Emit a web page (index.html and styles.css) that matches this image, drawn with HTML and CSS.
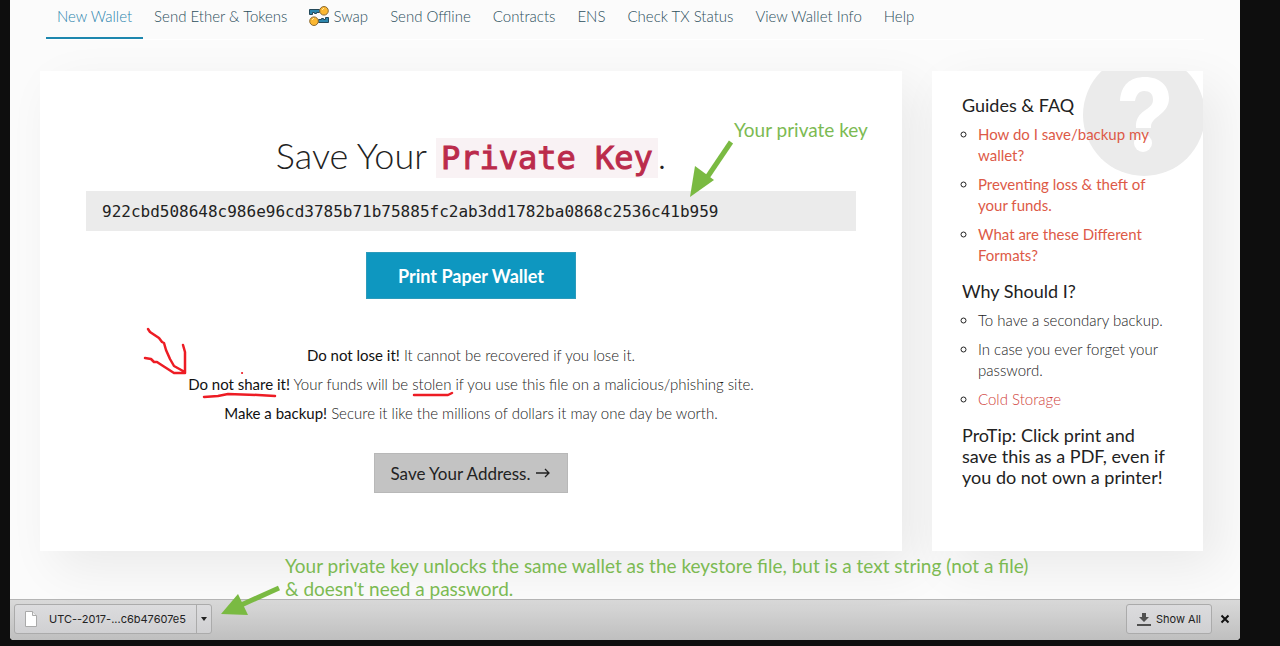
FILE: index.html
```html
<!DOCTYPE html>
<html lang="en">
<head>
    <meta charset="UTF-8">
    <meta name="viewport" content="width=device-width, initial-scale=1.0">
    <title>Save Your Private Key</title>
    <link rel="stylesheet" href="styles.css">
</head>
<body>

    <div class="window">

        <!-- Navigation -->
        <nav class="nav">
            <a href="#" class="active">New Wallet</a>
            <a href="#">Send Ether &amp; Tokens</a>
            <a href="#" class="swap">
                <svg width="20" height="20" viewBox="0 0 20 20" aria-hidden="true">
                    <path d="M10.500 3.500h-10v5h3v-2h2v1h2v-1h3z" fill="#2d86ad" stroke="#24485a"/>
                    <circle cx="15" cy="4.800" r="4.300" fill="#fbb731" stroke="#8a6a35"/>
                    <path d="M9.500 16.500h10v-5h-3v2h-2v-1h-2v1h-3z" fill="#2d86ad" stroke="#24485a"/>
                    <circle cx="5" cy="15.200" r="4.300" fill="#fbb731" stroke="#8a6a35"/>
                    <path d="M13 4l2-2M3 14l2-2" stroke="#ffe9a8"/>
                </svg>
                Swap</a>
            <a href="#">Send Offline</a>
            <a href="#">Contracts</a>
            <a href="#">ENS</a>
            <a href="#">Check TX Status</a>
            <a href="#">View Wallet Info</a>
            <a href="#">Help</a>
        </nav>

        <div class="content">

            <!-- Private key panel -->
            <main class="panel">
                <h1>Save Your <code>Private Key</code>.</h1>
                <input type="text" class="key" aria-label="Private key" readonly value="922cbd508648c986e96cd3785b71b75885fc2ab3dd1782ba0868c2536c41b959">
                <button type="button" class="btn-print">Print Paper Wallet</button>

                <div class="warnings">
                    <p><strong>Do not lose it!</strong> It cannot be recovered if you lose it.</p>
                    <p><strong>Do not share it!</strong> Your funds will be stolen if you use this file on a malicious/phishing site.</p>
                    <p><strong>Make a backup!</strong> Secure it like the millions of dollars it may one day be worth.</p>
                </div>

                <button type="button" class="btn-next">Save Your Address.
                    <svg width="16" height="12" viewBox="0 0 16 12" aria-hidden="true">
                        <path d="M1 6h13M10 2l4 4-4 4" fill="none" stroke="#222" stroke-width="1.3"/>
                    </svg>
                </button>
            </main>

            <!-- Help sidebar -->
            <aside class="sidebar">
                <svg class="question" width="122" height="122" viewBox="0 0 122 122" aria-hidden="true">
                    <circle cx="61" cy="61" r="61" fill="#ebebeb"/>
                    <path d="M37 47C38 31 47 23 62 23c15 0 24 9 24 21 0 17-18 18-18 29v1H53c-1-19 17-17 17-28 0-6-3-9-9-9-5 0-8 4-9 10z" fill="#fff"/>
                    <circle cx="60" cy="89" r="9" fill="#fff"/>
                </svg>
                <h2>Guides &amp; FAQ</h2>
                <ul class="guides">
                    <li><a href="#">How do I save/backup my wallet?</a></li>
                    <li><a href="#">Preventing loss &amp; theft of your funds.</a></li>
                    <li><a href="#">What are these Different Formats?</a></li>
                </ul>
                <h2>Why Should I?</h2>
                <ul>
                    <li>To have a secondary backup.</li>
                    <li>In case you ever forget your password.</li>
                    <li><a href="#">Cold Storage</a></li>
                </ul>
                <h2>ProTip: Click print and save this as a PDF, even if you do not own a printer!</h2>
            </aside>
        </div>

        <!-- Download bar -->
        <footer class="downloads">
            <div class="file">
                <button type="button" class="file-name">
                    <svg width="12" height="16" viewBox="0 0 12 16" aria-hidden="true">
                        <path d="M.5.5h7l4 4v11H.5z" fill="#fff" stroke="#aaa"/>
                        <path d="M7.500.5v4h4" fill="#eee" stroke="#aaa"/>
                    </svg>
                    UTC--2017-...c6b47607e5
                </button>
                <button type="button" class="file-menu" aria-label="Download options">
                    <svg width="6" height="4" viewBox="0 0 6 4"><path d="M0 0h6L3 4z" fill="#222"/></svg>
                </button>
            </div>
            <button type="button" class="show-all">
                <svg width="14" height="14" viewBox="0 0 14 14" aria-hidden="true">
                    <path d="M5 1h4v4h3L7 10 2 5h3zM0 12h14v2H0z" fill="#505050"/>
                </svg>
                Show All
            </button>
            <button type="button" class="close" aria-label="Close">
                <svg width="10" height="10" viewBox="0 0 10 10"><path d="M1.500 1.500l7 7M8.500 1.500l-7 7" stroke="#111" stroke-width="2"/></svg>
            </button>
        </footer>

        <!-- Notes drawn over the page -->
        <p class="note note-key">Your private key</p>
        <p class="note note-file">Your private key unlocks the same wallet as the keystore file, but is a text string (not a file)<br>&amp; doesn't need a password.</p>
        <svg class="marks" width="1230" height="640" viewBox="10 0 1230 640" aria-hidden="true">
            <g fill="#7aba42" stroke="#7aba42">
                <path d="M731 142l-27 40" stroke-width="5"/>
                <path d="M690 197l5-31 19 14z" stroke="none"/>
                <path d="M279 588l-40 18" stroke-width="5"/>
                <path d="M221 614l17-20 10 21z" stroke="none"/>
            </g>
            <g fill="none" stroke="#ed1c24" stroke-width="2.500" stroke-linecap="round" stroke-linejoin="round">
                <path d="M148 329l2 3 9 6 3 4 2 1 2 7 4 9 4 7 9 5M183 345l2 7v21h-11l-14-9-3-2h-3l-3-3-6-1"/>
                <path d="M204 397l14-1 10-2 30 1 17 1M414 395h34l4-2"/>
                <path d="M242 373h.1" stroke-width="2"/>
            </g>
        </svg>
    </div>

</body>
</html>
```

FILE: styles.css
```css
* {
    box-sizing: border-box;
    margin: 0;
    padding: 0;
}

body {
    background: #0e0e0e;
    color: #222;
    font-family: Lato, sans-serif;
    font-size: 15px;
    line-height: 21px;
}

button,
input {
    font-family: inherit;
    border: none;
}

.window {
    position: relative;
    margin: 0 40px 6px 10px;
    background: #fbfbfb;
    border-radius: 0 0 4px 4px;
    overflow: hidden;
}

/* Navigation */
.nav {
    display: flex;
    margin: 0 36px;
    border-bottom: 1px solid #fff;
}

.nav a {
    padding: 6px 11px 10px;
    color: #2c4f5c;
    font-size: 15px;
    font-weight: 300;
    text-decoration: none;
    border-bottom: 2px solid transparent;
}

.nav .active {
    color: #2b84ad;
    border-color: #1d87ae;
}

.nav .swap {
    display: flex;
    gap: 4px;
}

/* Columns */
.content {
    display: grid;
    grid-template-columns: 862fr 271fr;
    gap: 30px;
    padding: 31px 37px 48px 30px;
}

.panel,
.sidebar {
    background: #fff;
    box-shadow: 16px 16px 47px rgba(0, 0, 0, 0.07);
}

.panel {
    display: flex;
    flex-direction: column;
    align-items: center;
    padding: 62px 46px 58px;
}

h1 {
    margin-bottom: 11px;
    font-size: 36px;
    font-weight: 300;
    line-height: 44px;
    color: #222;
}

h1 code {
    padding: 1px 5px;
    background: #f9f2f4;
    color: #bb2b4b;
    font-family: "DejaVu Sans Mono", monospace;
    font-size: 32px;
    -webkit-text-stroke: 1px #bb2b4b;
}

.key {
    width: 100%;
    height: 40px;
    margin-bottom: 21px;
    padding: 0 16px;
    background: #ebebeb;
    color: #222;
    font-family: "DejaVu Sans Mono", monospace;
    font-size: 16px;
}

.btn-print {
    height: 47px;
    padding: 0 31px;
    background: #0e97c0;
    border: 1px solid #2c9bbb;
    color: #fff;
    font-size: 18px;
    font-weight: 700;
}

.warnings {
    display: flex;
    flex-direction: column;
    gap: 8px;
    margin: 46px 0 29px;
    text-align: center;
    font-weight: 300;
}

.warnings strong {
    font-weight: 400;
    color: #111;
}

.btn-next {
    display: flex;
    align-items: center;
    gap: 5px;
    height: 40px;
    padding: 0 16px;
    background: #c3c3c3;
    border: 1px solid #b8b8b8;
    color: #222;
    font-size: 17px;
}

/* Help sidebar */
.sidebar {
    position: relative;
    overflow: hidden;
    padding: 24px 30px;
}

.question {
    position: absolute;
    top: -17px;
    right: -2px;
}

.sidebar h2 {
    position: relative;
    font-size: 18px;
    font-weight: 400;
    line-height: 21px;
    color: #222;
}

.sidebar ul {
    position: relative;
    margin: 8px 0 15px;
    padding-left: 16px;
    list-style: circle;
    font-weight: 300;
}

.sidebar li {
    margin-bottom: 8px;
}

.sidebar a {
    color: #d03f3b;
    text-decoration: none;
}

.guides a {
    color: #dd5a47;
    font-weight: 400;
}

/* Download bar */
.downloads {
    display: flex;
    align-items: center;
    height: 41px;
    padding: 0 10px 3px 4px;
    background: linear-gradient(#d9d9d9, #bfbfbf);
    border-top: 1px solid #b5b5b5;
}

.downloads button {
    background: none;
    color: #222;
    font-family: Inter, sans-serif;
    font-size: 11px;
}

.file {
    display: flex;
    height: 30px;
    border: 1px solid #ababab;
    border-radius: 3px;
    background: linear-gradient(#dcdcde, #d0d0d2);
}

.file-name {
    display: flex;
    align-items: center;
    gap: 12px;
    padding: 0 10px;
}

.downloads .file-menu {
    display: flex;
    align-items: center;
    padding: 0 4px;
    border-left: 1px solid #ababab;
}

.downloads .show-all {
    display: flex;
    align-items: center;
    gap: 5px;
    height: 30px;
    margin-left: auto;
    padding: 0 10px;
    border: 1px solid #ababab;
    border-radius: 3px;
    background: linear-gradient(#dcdcde, #d0d0d2);
}

.close {
    display: flex;
    margin-left: 8px;
}

/* Notes */
.note {
    position: absolute;
    color: #7cba52;
    font-family: Lato, sans-serif;
    font-size: 19px;
    line-height: 23px;
}

.note-key {
    top: 118px;
    left: 724px;
}

.note-file {
    top: 554px;
    left: 275px;
}

.marks {
    position: absolute;
    top: 0;
    left: 0;
    pointer-events: none;
}
```
